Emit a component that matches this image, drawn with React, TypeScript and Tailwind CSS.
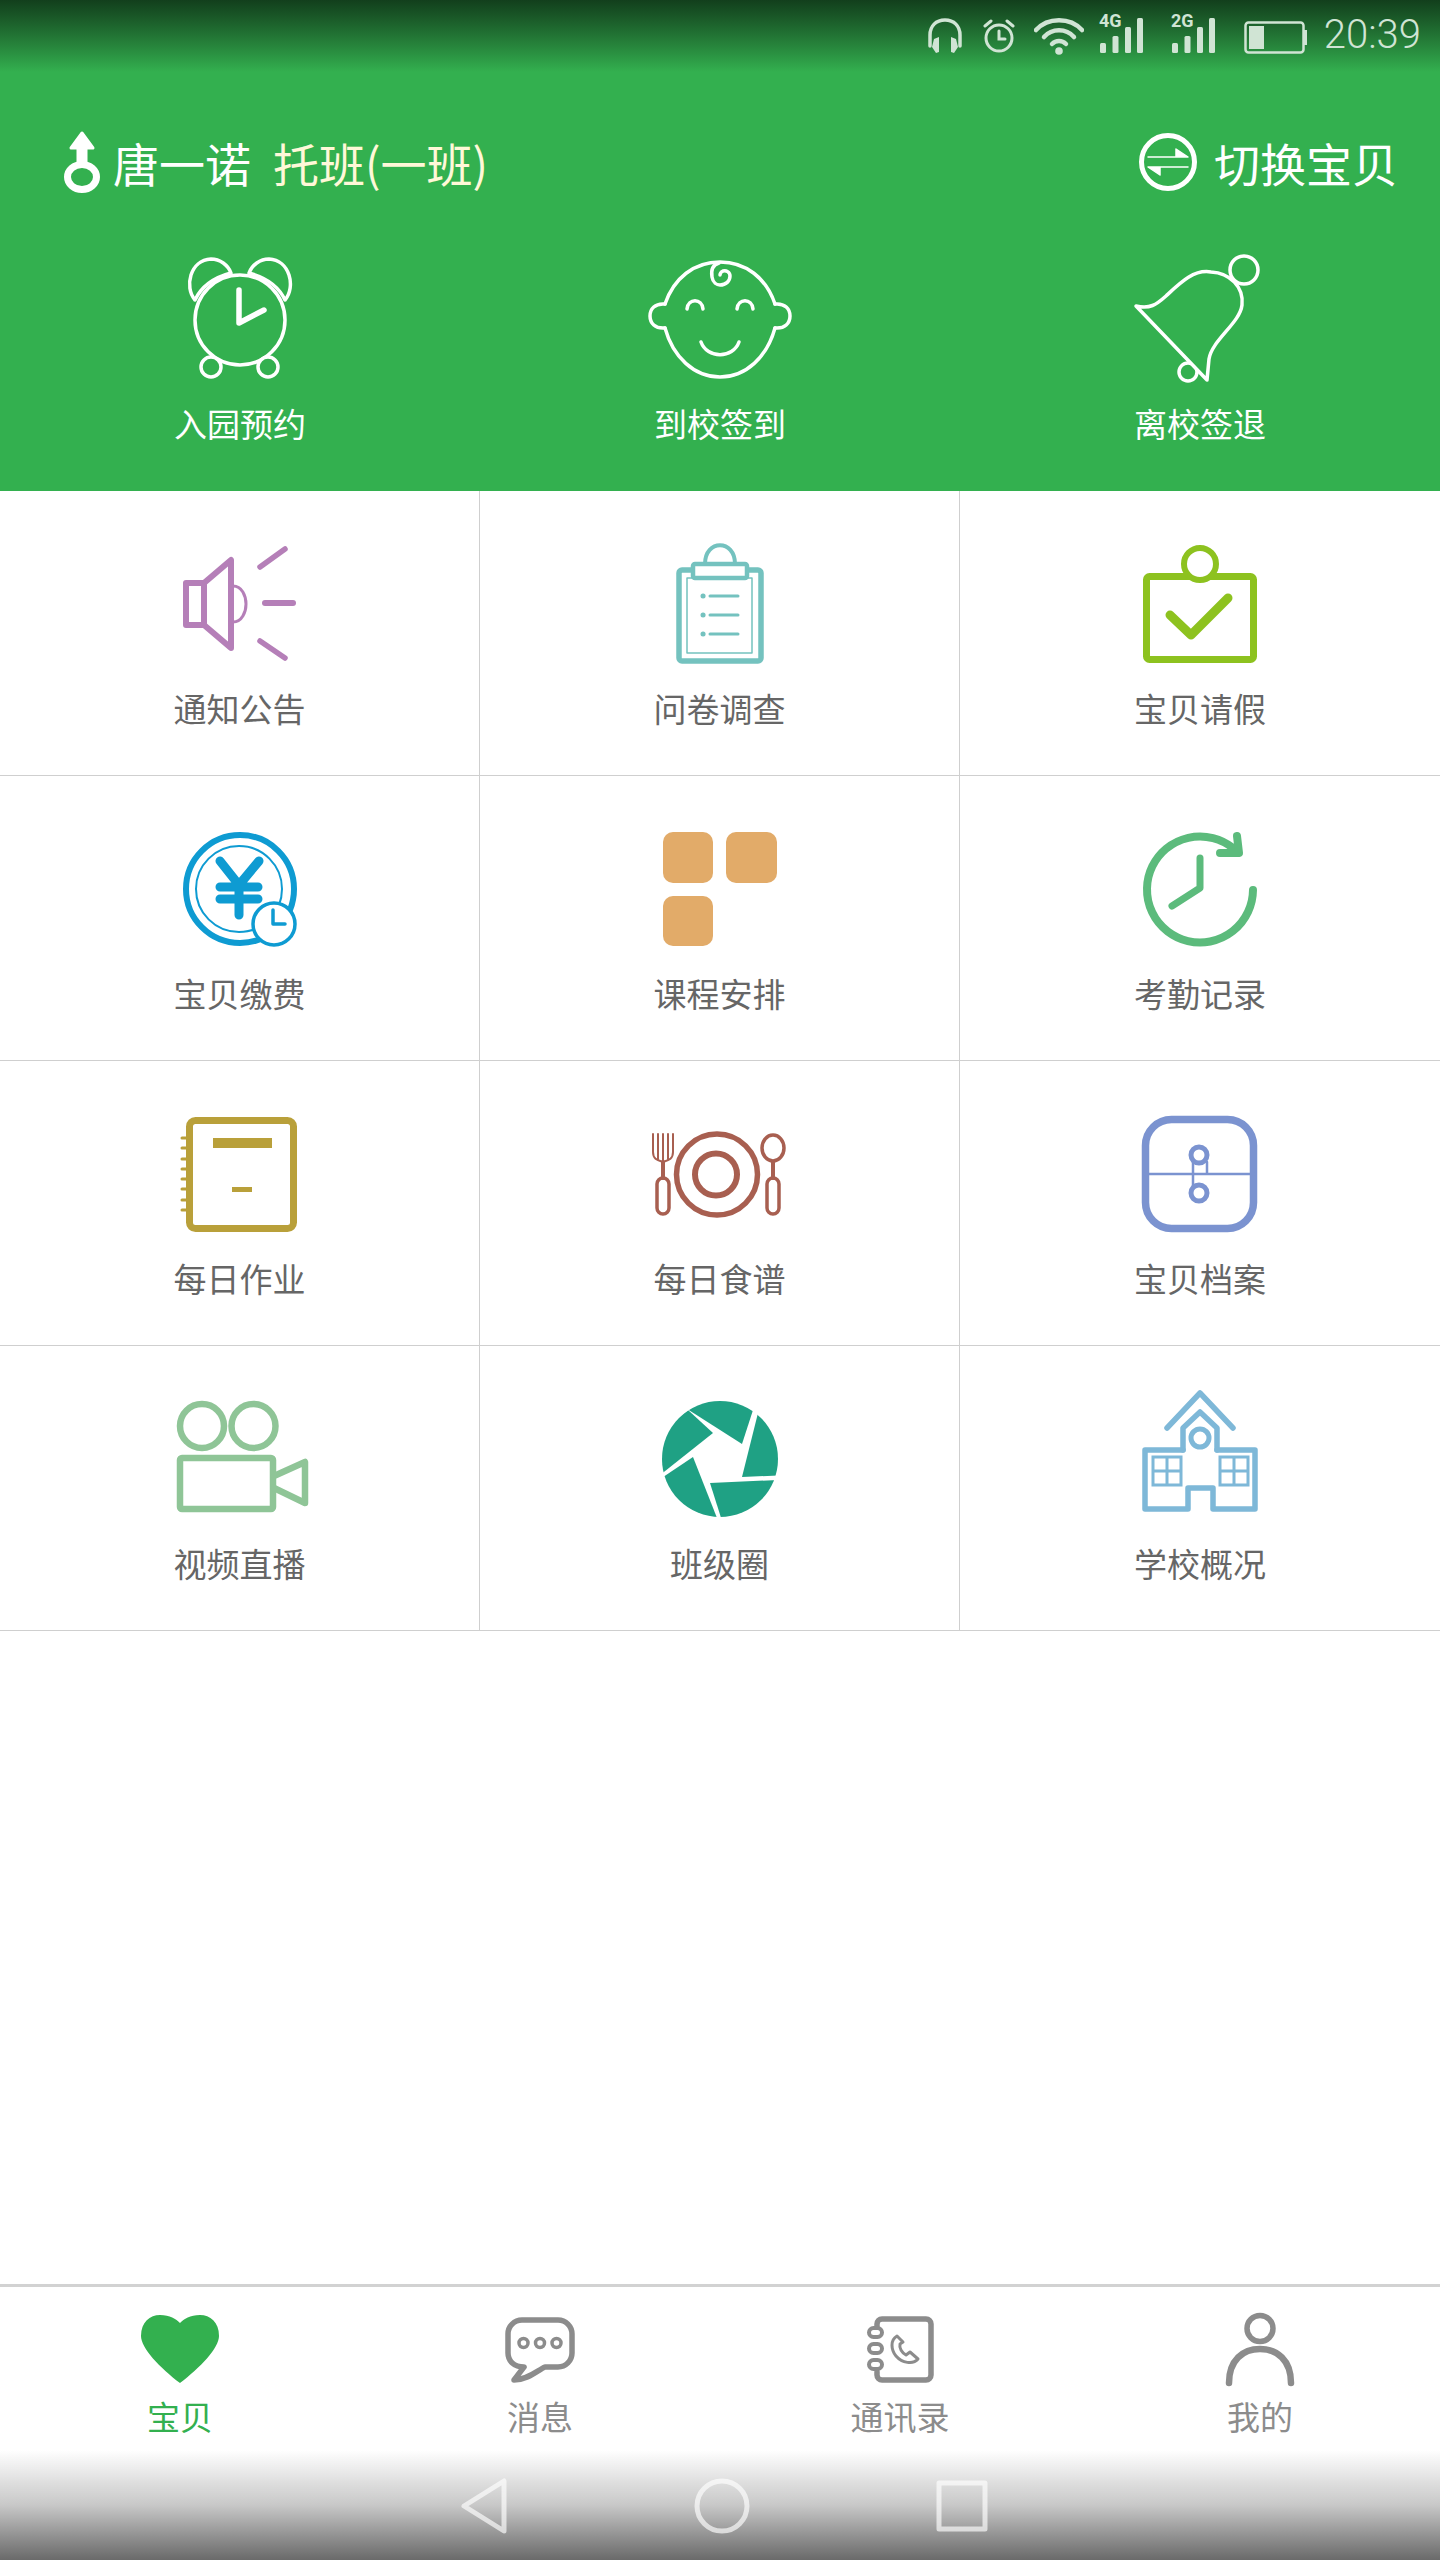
import React from "react";

const G = ({ c, w, children }: { c: string; w: number; children: React.ReactNode }) => (
  <g fill="none" stroke={c} strokeWidth={w} strokeLinecap="round" strokeLinejoin="round">{children}</g>
);

const Icon = ({ children }: { children: React.ReactNode }) => (
  <svg width="160" height="130" viewBox="-80 -65 160 130" className="block overflow-visible">{children}</svg>
);

const W = "#ffffff";

const headerIcons = [
  <G c={W} w={3.5}>
    <circle cx="0" cy="5" r="45" />
    <path d="M-45 -15 C-56 -28 -50 -55 -29 -56 C-20 -56 -12 -50 -9 -42 C-24 -38 -38 -30 -45 -15 Z" />
    <path d="M45 -15 C56 -28 50 -55 29 -56 C20 -56 12 -50 9 -42 C24 -38 38 -30 45 -15 Z" />
    <circle cx="-29" cy="52" r="10" fill="#33b04f" />
    <circle cx="28" cy="52" r="10" fill="#33b04f" />
    <path d="M-1 -25 V8 L24 -5" strokeWidth={5.5} />
  </G>,
  <G c={W} w={3.5}>
    <path d="M-55 -11 C-46 -37 -26 -53 0 -53 C26 -53 46 -37 55 -11" />
    <path d="M-55 13 C-47 42 -26 62 0 62 C26 62 47 42 55 13" />
    <path d="M-55 -11 C-65 -12 -70 -6 -70 1 C-70 8 -65 14 -55 13" />
    <path d="M55 -11 C65 -12 70 -6 70 1 C70 8 65 14 55 13" />
    <path d="M-33 -6 C-32 -17 -18 -17 -17 -6" />
    <path d="M17 -6 C18 -17 32 -17 33 -6" />
    <path d="M-19 27 C-13 44 13 44 19 27" />
    <path d="M-1 -52 C-8 -50 -9 -44 -8 -38 C-7 -32 -3 -30 0 -30 C6 -30 10 -34 10 -39 C10 -43 6 -45 3 -44 C1 -43 0 -42 0 -40" />
  </G>,
  <G c={W} w={3.5}>
    <circle cx="44" cy="-45" r="14" />
    <circle cx="-12" cy="57" r="9" />
    <path d="M-64 -9 C-50 -6 -44 -10 -34 -19 C-20 -32 -6 -46 11 -43 C30 -42 44 -28 42 -10 C40 8 12 25 9 44 L7 65 Z" fill="#33b04f" />
  </G>,
];

const gridIcons = [
  <G c="#b57fb8" w={6}>
    <path d="M-54 -21 H-36 L-9 -44 V44 L-36 21 H-54 Z M-36 -21 V21" />
    <path d="M-7 -18 C2 -18 6 -8 6 0 C6 8 2 18 -7 18" strokeWidth={3} />
    <path d="M20 -37 L45 -55" strokeWidth={5.5} />
    <path d="M25 -1 H53" />
    <path d="M20 37 L45 54" strokeWidth={5.5} />
  </G>,
  <G c="#74c2bf" w={5.5}>
    <rect x="-41" y="-34" width="82" height="91" rx="3" />
    <rect x="-33" y="-26" width="65" height="75" strokeWidth={1.5} />
    <path d="M-15 -40 C-15 -65 15 -65 15 -40" strokeWidth={4} />
    <rect x="-27" y="-40" width="54" height="14" rx="2" fill="#fff" strokeWidth={4.5} />
    <path d="M-10 -8 H18 M-10 11 H18 M-10 30 H18" strokeWidth={3} />
    <path d="M-17 -8 h0.1 M-17 11 h0.1 M-17 30 h0.1" strokeWidth={5} />
  </G>,
  <G c="#8dc21f" w={7}>
    <rect x="-53.5" y="-27.5" width="107" height="83" rx="3" />
    <circle cx="0" cy="-40" r="16" fill="#fff" strokeWidth={6} />
    <path d="M-30 11 L-9 31 L28 -6" strokeWidth={9} />
  </G>,
  <G c="#0e9bd2" w={6}>
    <circle cx="0" cy="0" r="54" />
    <circle cx="-1" cy="0" r="43" strokeWidth={2} />
    <path d="M-20 -28 L-1 -4 L19 -28 M-1 -4 V26 M-20 -2 H18 M-20 10 H18" strokeWidth={9} />
    <circle cx="34" cy="35" r="21" fill="#fff" strokeWidth={3.5} />
    <path d="M33 21 V35 H45" strokeWidth={3.5} />
  </G>,
  <g fill="#e2ab69">
    <rect x="-57" y="-57" width="50" height="51" rx="10" />
    <rect x="6" y="-57" width="51" height="51" rx="10" />
    <rect x="-57" y="7" width="50" height="50" rx="10" />
  </g>,
  <G c="#5cbb7c" w={8}>
    <path d="M33 -41 A53 53 0 1 0 53 1" />
    <path d="M37 -53 L39 -36 H20" strokeWidth={8} />
    <path d="M0 -31 V-1 L-28 17" strokeWidth={7} />
  </G>,
  <G c="#b9a03a" w={7}>
    <rect x="-50.5" y="-53.5" width="104" height="108" rx="6" />
    <rect x="-27" y="-36" width="59" height="10" fill="#b9a03a" stroke="none" />
    <rect x="-8" y="13" width="20" height="5" fill="#b9a03a" stroke="none" />
    <path d="M-58 -36 H-52 M-58 -26 H-52 M-58 -15 H-52 M-58 -5 H-52 M-58 5 H-52 M-58 15 H-52 M-58 26 H-52 M-58 36 H-52" strokeWidth={3} />
  </G>,
  <G c="#a85f50" w={5.5}>
    <circle cx="-3" cy="0.5" r="40.5" />
    <circle cx="-4" cy="0.5" r="21" strokeWidth={6} />
    <path d="M-67 -40 V-22 C-67 -15 -63 -14 -57 -12 C-51 -14 -47 -15 -47 -22 V-40 M-62 -40 V-15 M-57 -40 V-12 M-52 -40 V-15" strokeWidth={2} />
    <rect x="-63" y="4" width="12" height="36" rx="6" strokeWidth={3.5} />
    <path d="M-57 -12 V4" strokeWidth={4} />
    <ellipse cx="53" cy="-26" rx="11" ry="13" strokeWidth={3.5} />
    <rect x="47" y="4" width="12" height="36" rx="6" strokeWidth={3.5} />
    <path d="M53 -12 V4" strokeWidth={4} />
  </G>,
  <G c="#7b93d0" w={7.5}>
    <rect x="-54.5" y="-54.5" width="108" height="109" rx="26" />
    <path d="M-55 0 H54 M-7 -12 V12 M7 -12 V0" strokeWidth={2.5} />
    <circle cx="-1" cy="-19" r="8" fill="#fff" strokeWidth={5} />
    <circle cx="-1" cy="19" r="8" fill="#fff" strokeWidth={5} />
  </G>,
  <G c="#8fc597" w={6.5}>
    <circle cx="-38" cy="-33" r="22" />
    <circle cx="13.5" cy="-33" r="22" />
    <rect x="-60" y="-1" width="93" height="51" rx="2" />
    <path d="M34 17 L65 3 V44 L34 29" />
  </G>,
  <g>
    <clipPath id="aperture-clip">
      <circle cx="0" cy="0" r="58" />
    </clipPath>
    <g clipPath="url(#aperture-clip)" fill="#1fa184">
      <polygon points="22,-15 34,-52 0,-70 -36,-52" />
      <polygon points="22,18 39,-50 70,-20 70,16" />
      <polygon points="-10,24 58,21 50,70 3,65" />
      <polygon points="-27,-2 -1,64 -50,60 -60,20" />
      <polygon points="-7,-26 -60,16 -70,-20 -32,-49" />
    </g>
  </g>,
  <G c="#7eb8d8" w={5.5}>
    <path d="M-33 -31 L0 -66 L33 -31" />
    <path d="M-17 -9 V-31 L0 -47 L17 -31 V-9" />
    <path d="M-17 -9 H-55 V50 H-12 V29 H13 V50 H55 V-9 H17" />
    <circle cx="0" cy="-21" r="9" strokeWidth={5} />
    <path d="M-47 -2 H-19 V26 H-47 Z M-33 -2 V26 M-47 12 H-19 M20 -2 H48 V26 H20 Z M34 -2 V26 M20 12 H48" strokeWidth={3} strokeLinecap="butt" strokeLinejoin="miter" />
  </G>,
];

const headerLabels = ["入园预约", "到校签到", "离校签退"];
const gridLabels = [
  "通知公告", "问卷调查", "宝贝请假",
  "宝贝缴费", "课程安排", "考勤记录",
  "每日作业", "每日食谱", "宝贝档案",
  "视频直播", "班级圈", "学校概况",
];

const TabIcon = ({ children }: { children: React.ReactNode }) => (
  <svg width="90" height="80" viewBox="-45 -40 90 80" className="block">{children}</svg>
);

const tabs = [
  {
    label: "宝贝",
    active: true,
    icon: <path fill="#33b04f" d="M0 33 C-20 18 -39 -2 -39 -14 C-39 -28 -30 -35 -20 -35 C-10 -35 -4 -31 0 -27 C4 -31 10 -35 20 -35 C30 -35 39 -28 39 -14 C39 -2 20 18 0 33 Z" />,
  },
  {
    label: "消息",
    icon: (
      <G c="#8c8c8c" w={5.5}>
        <path d="M-18 -30 H18 A14 14 0 0 1 32 -16 V3 A14 14 0 0 1 18 17 H5 C-2 20 -12 30 -26 30 L-16 17 C-26 17 -32 11 -32 3 V-16 A14 14 0 0 1 -18 -30 Z" />
        <circle cx="-16.5" cy="-7" r="4.5" strokeWidth={3.5} />
        <circle cx="0" cy="-7" r="4.5" strokeWidth={3.5} />
        <circle cx="16.5" cy="-7" r="4.5" strokeWidth={3.5} />
      </G>
    ),
  },
  {
    label: "通讯录",
    icon: (
      <G c="#8c8c8c" w={5.5}>
        <path d="M-23 -24 V-26 A5 5 0 0 1 -18 -31 H26 A5 5 0 0 1 31 -26 V25 A5 5 0 0 1 26 30 H-18 A5 5 0 0 1 -23 25 V22" />
        <rect x="-31" y="-22" width="13" height="9" rx="4.5" fill="#fff" strokeWidth={4} />
        <rect x="-31" y="-6" width="13" height="9" rx="4.5" fill="#fff" strokeWidth={4} />
        <rect x="-31" y="10" width="13" height="9" rx="4.5" fill="#fff" strokeWidth={4} />
        <path d="M-3 -14 C-10 -10 -9 0 -4 6 C2 13 13 15 18 9 L10 2 L6 5 C2 3 -1 -2 0 -6 L3 -8 Z" strokeWidth={3} />
      </G>
    ),
  },
  {
    label: "我的",
    icon: (
      <G c="#8c8c8c" w={6.5}>
        <circle cx="0" cy="-21.5" r="13" strokeWidth={5.5} />
        <path d="M-31 33 C-31 10 -17 -1 0 -1 C17 -1 31 10 31 33" />
      </G>
    ),
  },
];

const SB = "#d0e4d4";

const Signal = ({ t }: { t: string }) => (
  <svg width="44" height="40" viewBox="0 0 44 40" className="block overflow-visible">
    <text x="-1" y="13" fontFamily="Roboto, sans-serif" fontWeight="700" fontSize="18" fill={SB}>{t}</text>
    <rect x="0" y="29" width="6" height="10" rx="1.5" fill={SB} />
    <rect x="12.5" y="22" width="6" height="17" rx="1.5" fill={SB} />
    <rect x="25" y="13" width="6" height="26" rx="1.5" fill={SB} />
    <rect x="37" y="4" width="6" height="35" rx="1.5" fill={SB} />
  </svg>
);

export default function App() {
  return (
    <div className="relative w-[1440px] h-[2560px] flex flex-col bg-white overflow-hidden font-['Noto_Sans_CJK_SC','Noto_Sans',sans-serif]">
      <div className="h-[491px] shrink-0 bg-[#33b04f] flex flex-col">
        {/* status bar */}
        <div className="h-[72px] shrink-0 bg-linear-to-b from-[#123f1c] to-[#33b04f] flex items-start justify-end pr-[19px] pt-[14px]">
          <svg width="36" height="36" viewBox="0 0 36 36" className="block mt-[4px]" fill="none">
            <path d="M3 28 V17 C3 8 9 2 18 2 C27 2 33 8 33 17 V28" stroke={SB} strokeWidth="3.5" strokeLinecap="round" />
            <path d="M7 21 L12 19 L12 34 L9 35 L5 29 Z M29 21 L24 19 L24 34 L27 35 L31 29 Z" fill={SB} />
          </svg>
          <svg width="32" height="34" viewBox="0 0 32 34" className="block ml-[20px] mt-[5px]" fill="none" stroke={SB} strokeWidth="3" strokeLinecap="round">
            <circle cx="16" cy="19" r="13" />
            <path d="M16 12 V20 H22" />
            <path d="M2 7 L8 2 M30 7 L24 2" />
          </svg>
          <svg width="50" height="38" viewBox="0 0 50 38" className="block ml-[19px] mt-[4px]" fill="none" stroke={SB} strokeWidth="4.5" strokeLinecap="round">
            <path d="M2 12 C14 -1 36 -1 48 12" />
            <path d="M10 19 C18 10 32 10 40 19" />
            <path d="M18 26 C22 22 28 22 32 26" />
            <circle cx="25" cy="33" r="3.8" fill={SB} stroke="none" />
          </svg>
          <div className="ml-[16px]"><Signal t="4G" /></div>
          <div className="ml-[28px]"><Signal t="2G" /></div>
          <svg width="65" height="34" viewBox="0 0 65 34" className="block ml-[28px] mt-[7px]" fill="none">
            <rect x="1.5" y="1.5" width="58" height="30" rx="3" stroke={SB} strokeWidth="2.5" />
            <rect x="5" y="5" width="15" height="23" fill={SB} />
            <rect x="60" y="9" width="3" height="15" fill={SB} />
          </svg>
          <span className="ml-[15px] text-[40px] leading-[42px] font-['Roboto',sans-serif] font-light text-[#d0e4d4]">20:39</span>
        </div>

        {/* child row */}
        <div className="h-[178px] shrink-0 pt-[2px] flex items-center justify-between pl-[62px] pr-[42px] text-[46px] leading-[60px] text-white">
          <div className="flex items-center">
            <svg width="40" height="64" viewBox="0 0 40 64" className="block">
              <path d="M20 3 L31 18 H24 V32 H16 V18 H9 Z" fill="#fff" stroke="#fff" strokeWidth="3" strokeLinejoin="round" />
              <ellipse cx="20" cy="47" rx="14.5" ry="12.5" fill="none" stroke="#fff" strokeWidth="7" />
            </svg>
            <span className="ml-[11px]">唐一诺</span>
            <span className="ml-[22px] text-[#fff8d8]">托班(一班)</span>
          </div>
          <div className="flex items-center">
            <svg width="60" height="60" viewBox="-30 -30 60 60" className="block">
              <circle cx="0" cy="0" r="26.5" fill="none" stroke="#fff" strokeWidth="5" />
              <path d="M-20 -5 H20 L8 -13 V-5 Z M20 5 H-20 L-8 13 V5 Z" fill="#fff" stroke="#fff" strokeWidth="1.5" strokeLinejoin="round" />
            </svg>
            <span className="ml-[16px]">切换宝贝</span>
          </div>
        </div>

        {/* quick actions */}
        <div className="grid grid-cols-3">
          {headerLabels.map((l, i) => (
            <div key={l} className="flex flex-col items-center">
              <Icon>{headerIcons[i]}</Icon>
              <span className="mt-[20px] text-[33px] leading-[46px] text-white">{l}</span>
            </div>
          ))}
        </div>
      </div>

      {/* feature grid */}
      <div className="grid grid-cols-3">
        {gridLabels.map((l, i) => (
          <div
            key={l}
            className={
              i % 3 === 2
                ? "h-[285px] flex flex-col items-center pt-[48px] border-b border-[#cfcfcf]"
                : "h-[285px] flex flex-col items-center pt-[48px] border-b border-r border-[#cfcfcf]"
            }
          >
            <Icon>{gridIcons[i]}</Icon>
            <span className="mt-[16px] text-[33px] leading-[46px] text-[#666666]">{l}</span>
          </div>
        ))}
      </div>

      {/* bottom area */}
      <div className="mt-auto">
        <div className="h-[166px] border-t-[3px] border-[#d2d2d2] grid grid-cols-4 pt-[23px]">
          {tabs.map((t) => (
            <div key={t.label} className="flex flex-col items-center">
              <TabIcon>{t.icon}</TabIcon>
              <span className={t.active ? "mt-[3px] text-[33px] leading-[46px] text-[#33b04f]" : "mt-[3px] text-[33px] leading-[46px] text-[#8c8c8c]"}>{t.label}</span>
            </div>
          ))}
        </div>
        <div className="h-[110px] bg-linear-to-b from-white via-[#c8c8c8] to-[#6a6a6a] flex items-center justify-center pt-[2px]">
          <svg width="60" height="60" viewBox="0 0 60 60" className="block mr-[180px]" fill="none" stroke="#ffffff" strokeOpacity="0.65" strokeWidth="5" strokeLinejoin="round">
            <path d="M52 5 V55 L12 30 Z" />
          </svg>
          <svg width="60" height="60" viewBox="0 0 60 60" className="block" fill="none" stroke="#ffffff" strokeOpacity="0.65" strokeWidth="5">
            <circle cx="30" cy="30" r="25" />
          </svg>
          <svg width="54" height="54" viewBox="0 0 54 54" className="block ml-[183px]" fill="none" stroke="#ffffff" strokeOpacity="0.65" strokeWidth="5" strokeLinejoin="round">
            <rect x="4" y="4" width="46" height="46" />
          </svg>
        </div>
      </div>
    </div>
  );
}
